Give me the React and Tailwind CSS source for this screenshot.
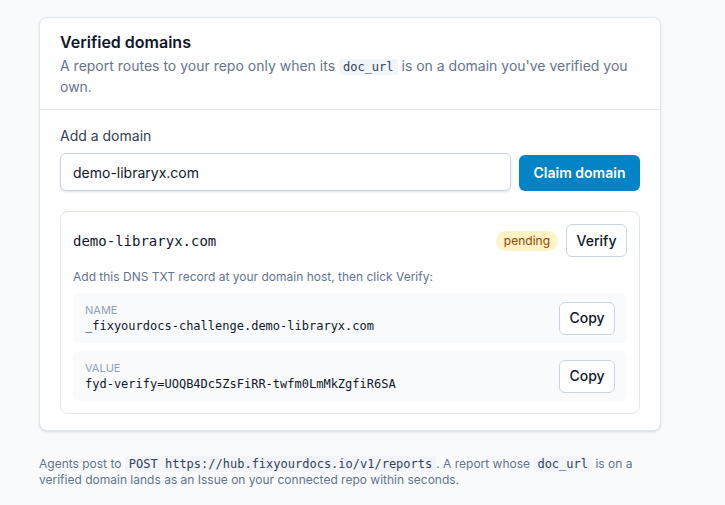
import React, { useState } from "react";

const mono = "font-['DejaVu_Sans_Mono',monospace]";

function Code({ children }) {
  return (
    <code className={`${mono} text-[12px] bg-slate-100 text-slate-700 rounded px-1 py-[1px]`}>
      {children}
    </code>
  );
}

function RecordRow({ label, value }) {
  return (
    <div className="flex items-center justify-between rounded-md bg-slate-50 pl-3 pr-3 h-[50px]">
      <div className="flex flex-col">
        <span className="text-[11px] leading-4 uppercase text-slate-400">{label}</span>
        <span className={`${mono} text-[12px] leading-4 text-slate-900`}>{value}</span>
      </div>
      <button className="h-[33px] w-[56px] rounded-md border border-slate-300 bg-white text-sm font-medium text-slate-900">
        Copy
      </button>
    </div>
  );
}

export default function App() {
  const [domain, setDomain] = useState("demo-libraryx.com");

  return (
    <div className="min-h-[505px] bg-slate-50 pl-[39px] pt-[17px] font-['Inter',sans-serif]">
      <div className="w-[622px] rounded-lg border border-slate-200 bg-white shadow-sm">
        <div className="border-b border-slate-200 px-5 pt-3 pb-3">
          <h2 className="text-base leading-6 font-semibold text-slate-900">Verified domains</h2>
          <p className="mt-[2px] text-sm leading-5 text-slate-500">
            A report routes to your repo only when its <Code>doc_url</Code> is on a domain you've verified you own.
          </p>
        </div>

        <div className="px-5 pt-4 pb-4">
          <label className="block text-sm leading-5 text-slate-700">Add a domain</label>
          <div className="mt-[7px] flex items-end gap-2">
            <input
              value={domain}
              onChange={(e) => setDomain(e.target.value)}
              className="h-[38px] flex-1 rounded-md border border-slate-300 bg-white px-3 text-sm text-slate-900 shadow-sm outline-none"
            />
            <button className="h-[36px] w-[121px] rounded-md bg-[#0284c7] text-sm font-semibold text-white">
              Claim domain
            </button>
          </div>

          <div className="mt-5 rounded-lg border border-slate-200 p-3">
            <div className="flex items-center justify-between">
              <span className={`${mono} text-sm text-slate-900`}>demo-libraryx.com</span>
              <div className="flex items-center gap-2">
                <span className="rounded-full bg-amber-100 px-2 h-5 leading-5 text-xs text-amber-800">pending</span>
                <button className="h-[33px] w-[61px] rounded-md border border-slate-300 bg-white text-sm font-medium text-slate-900">
                  Verify
                </button>
              </div>
            </div>
            <p className="mt-3 text-xs leading-4 text-slate-500">
              Add this DNS TXT record at your domain host, then click Verify:
            </p>
            <div className="mt-2 flex flex-col gap-2">
              <RecordRow label="Name" value="_fixyourdocs-challenge.demo-libraryx.com" />
              <RecordRow label="Value" value="fyd-verify=UOQB4Dc5ZsFiRR-twfm0LmMkZgfiR6SA" />
            </div>
          </div>
        </div>
      </div>

      <p className="mt-[25px] w-[622px] text-xs leading-4 text-slate-500">
        Agents post to <Code>POST https://hub.fixyourdocs.io/v1/reports</Code>. A report whose <Code>doc_url</Code> is on a verified domain lands as an Issue on your connected repo within seconds.
      </p>
    </div>
  );
}
